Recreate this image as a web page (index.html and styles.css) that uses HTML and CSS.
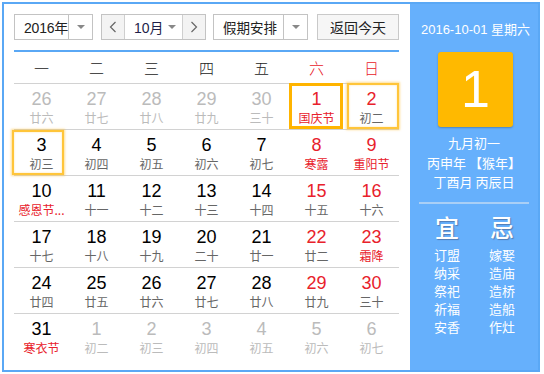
FILE: index.html
```html
<!DOCTYPE html>
<html lang="zh">
<head>
<meta charset="utf-8">
<title>万年历</title>
<link rel="stylesheet" href="styles.css">
</head>
<body>
<div class="cal">
  <div class="main">
    <div class="bar">
      <div class="sel sel-year"><span class="sel-text">2016年</span><span class="sel-arrow"></span></div>
      <div class="sel sel-month">
        <span class="nav"><svg width="8" height="12" viewBox="0 0 8 12"><polyline points="6.5,1 1.5,6 6.5,11" fill="none" stroke="#666" stroke-width="1.2"/></svg></span>
        <span class="sel-text month-text">10月</span><span class="month-arrow"></span>
        <span class="nav nav-next"><svg width="8" height="12" viewBox="0 0 8 12"><polyline points="1.5,1 6.5,6 1.5,11" fill="none" stroke="#666" stroke-width="1.2"/></svg></span>
      </div>
      <div class="sel sel-holiday"><span class="sel-text">假期安排</span><span class="sel-arrow"></span></div>
      <div class="btn-today">返回今天</div>
    </div>
    <div class="grid">
      <div class="row head">
        <span>一</span><span>二</span><span>三</span><span>四</span><span>五</span><span class="red">六</span><span class="red">日</span>
      </div>
      <div class="row">
        <div class="cell other"><b>26</b><i>廿六</i></div>
        <div class="cell other"><b>27</b><i>廿七</i></div>
        <div class="cell other"><b>28</b><i>廿八</i></div>
        <div class="cell other"><b>29</b><i>廿九</i></div>
        <div class="cell other"><b>30</b><i>三十</i></div>
        <div class="cell sel-day"><b class="red">1</b><i class="red">国庆节</i></div>
        <div class="cell glow glow-a"><b class="red">2</b><i>初二</i></div>
      </div>
      <div class="row">
        <div class="cell glow glow-b"><b>3</b><i>初三</i></div>
        <div class="cell"><b>4</b><i>初四</i></div>
        <div class="cell"><b>5</b><i>初五</i></div>
        <div class="cell"><b>6</b><i>初六</i></div>
        <div class="cell"><b>7</b><i>初七</i></div>
        <div class="cell"><b class="red">8</b><i class="red">寒露</i></div>
        <div class="cell"><b class="red">9</b><i class="red">重阳节</i></div>
      </div>
      <div class="row">
        <div class="cell"><b>10</b><i class="red">感恩节...</i></div>
        <div class="cell"><b>11</b><i>十一</i></div>
        <div class="cell"><b>12</b><i>十二</i></div>
        <div class="cell"><b>13</b><i>十三</i></div>
        <div class="cell"><b>14</b><i>十四</i></div>
        <div class="cell"><b class="red">15</b><i>十五</i></div>
        <div class="cell"><b class="red">16</b><i>十六</i></div>
      </div>
      <div class="row">
        <div class="cell"><b>17</b><i>十七</i></div>
        <div class="cell"><b>18</b><i>十八</i></div>
        <div class="cell"><b>19</b><i>十九</i></div>
        <div class="cell"><b>20</b><i>二十</i></div>
        <div class="cell"><b>21</b><i>廿一</i></div>
        <div class="cell"><b class="red">22</b><i>廿二</i></div>
        <div class="cell"><b class="red">23</b><i class="red">霜降</i></div>
      </div>
      <div class="row">
        <div class="cell"><b>24</b><i>廿四</i></div>
        <div class="cell"><b>25</b><i>廿五</i></div>
        <div class="cell"><b>26</b><i>廿六</i></div>
        <div class="cell"><b>27</b><i>廿七</i></div>
        <div class="cell"><b>28</b><i>廿八</i></div>
        <div class="cell"><b class="red">29</b><i>廿九</i></div>
        <div class="cell"><b class="red">30</b><i>三十</i></div>
      </div>
      <div class="row last">
        <div class="cell"><b>31</b><i class="red">寒衣节</i></div>
        <div class="cell other"><b>1</b><i>初二</i></div>
        <div class="cell other"><b>2</b><i>初三</i></div>
        <div class="cell other"><b>3</b><i>初四</i></div>
        <div class="cell other"><b>4</b><i>初五</i></div>
        <div class="cell other"><b>5</b><i>初六</i></div>
        <div class="cell other"><b>6</b><i>初七</i></div>
      </div>
    </div>
  </div>
  <div class="side">
    <div class="side-date">2016-10-01 星期六</div>
    <div class="big-day">1</div>
    <div class="lunar">
      <div>九月初一</div>
      <div>丙申年 【猴年】</div>
      <div>丁酉月 丙辰日</div>
    </div>
    <div class="yiji">
      <div class="col">
        <div class="yj-title">宜</div>
        <div>订盟</div><div>纳采</div><div>祭祀</div><div>祈福</div><div>安香</div>
      </div>
      <div class="col">
        <div class="yj-title">忌</div>
        <div>嫁娶</div><div>造庙</div><div>造桥</div><div>造船</div><div>作灶</div>
      </div>
    </div>
  </div>
</div>
</body>
</html>
```
FILE: styles.css
```css
* { box-sizing: border-box; }
body {
  margin: 0;
  background: #fff;
  font-family: "Liberation Sans", Arial, "Noto Sans CJK SC", sans-serif;
}
.cal {
  margin: 2px;
  width: 538px;
  height: 370px;
  border: 2px solid #5aa8f5;
  display: flex;
}
.main {
  width: 406px;
  padding: 10px 11px 0 10px;
}
.bar {
  display: flex;
  height: 26px;
}
.sel {
  display: flex;
  height: 26px;
  border: 1px solid #c3c3c3;
  background: #fff;
  font-size: 14px;
  color: #222;
  align-items: stretch;
  flex-shrink: 0;
}
.sel-text {
  display: flex;
  align-items: center;
  flex: 1;
  min-width: 0;
  padding-left: 10px;
  white-space: nowrap;
  font-family: "Liberation Sans", "Noto Sans CJK SC", sans-serif;
}
.sel-arrow {
  width: 24px;
  flex-shrink: 0;
  border-left: 1px solid #c3c3c3;
  position: relative;
}
.sel-arrow::after, .month-arrow::after {
  content: "";
  position: absolute;
  left: 50%;
  top: 50%;
  margin: -2px 0 0 -4px;
  border-left: 4px solid transparent;
  border-right: 4px solid transparent;
  border-top: 4px solid #888;
}
.sel-year { width: 79px; }
.sel-year .sel-text { padding-left: 9px; letter-spacing: -0.2px; }
.sel-month { width: 105px; margin-left: 8px; }
.sel-holiday { width: 95px; margin-left: 7px; }
.sel-holiday .sel-text { padding-left: 9px; font-size: 13.5px; }
.nav {
  width: 23px;
  flex-shrink: 0;
  background: #f3f3f3;
  border-right: 1px solid #cfcfcf;
  display: flex;
  align-items: center;
  justify-content: center;
}
.nav-next {
  border-right: 0;
  border-left: 1px solid #cfcfcf;
}
.month-text { padding-left: 9px; color: #1f1f4a; }
.month-arrow {
  width: 20px;
  flex-shrink: 0;
  position: relative;
}
.btn-today {
  width: 82px;
  flex-shrink: 0;
  margin-left: 9px;
  height: 26px;
  border: 1px solid #c9c9c9;
  background: #f6f6f6;
  font-size: 14px;
  color: #222;
  display: flex;
  align-items: center;
  justify-content: center;
  font-family: "Noto Sans CJK SC", sans-serif;
}
.grid {
  margin-top: 10px;
  border-top: 2px solid #5aa8f5;
}
.row {
  display: grid;
  grid-template-columns: repeat(7, 55px);
  height: 46px;
  border-bottom: 1px solid #d2d2d2;
}
.row.head {
  height: 32px;
  align-items: center;
  font-family: "Noto Sans CJK SC", sans-serif;
  font-size: 15px;
  font-weight: 300;
  color: #222;
}
.row.head span { text-align: center; }
.row.last { border-bottom: 0; }
.cell {
  position: relative;
  display: flex;
  flex-direction: column;
  align-items: center;
  padding-top: 5px;
}
.cell b {
  font-weight: normal;
  font-size: 18px;
  line-height: 20px;
  color: #000;
  font-family: "Liberation Sans", Arial, sans-serif;
}
.cell i {
  font-style: normal;
  font-size: 12px;
  line-height: 18px;
  color: #666;
  font-family: "Noto Sans CJK SC", sans-serif;
  white-space: nowrap;
}
.cell.other b, .cell.other i { color: #bbb; }
.cell b.red, .cell i.red, .red { color: #e8212b; }
.row.head .red { color: #e8212b; }
.sel-day::after {
  content: "";
  position: absolute;
  top: -1px;
  left: 0;
  right: 1px;
  bottom: 0;
  border: 3px solid #ffb400;
}
.glow::after {
  content: "";
  position: absolute;
  border: 2px solid #ffc53a;
  box-shadow: 0 0 2px 1px rgba(255, 195, 60, 0.55), inset 0 0 2px rgba(255, 195, 60, 0.5);
}
.glow-a::after { top: -1px; left: 3px; right: 0; bottom: 0; }
.glow-b::after { top: 0; left: -2px; right: 5px; bottom: 0; }
.side {
  width: 128px;
  background: #66b0fc;
  color: #fff;
  display: flex;
  flex-direction: column;
  align-items: center;
  font-family: "Liberation Sans", Arial, "Noto Sans CJK SC", sans-serif;
}
.side-date {
  margin-top: 16px;
  font-size: 13px;
  line-height: 20px;
  padding-left: 3px;
}
.big-day {
  margin-top: 12px;
  margin-left: 3px;
  width: 75px;
  height: 75px;
  background: #ffb900;
  border-radius: 3px;
  box-shadow: 0 1px 2px rgba(0, 0, 0, 0.25);
  font-size: 52px;
  line-height: 75px;
  text-align: center;
  font-family: "Liberation Sans", Arial, sans-serif;
}
.lunar {
  margin-top: 6px;
  font-size: 13px;
  line-height: 19.5px;
  text-align: center;
  font-family: "Noto Sans CJK SC", sans-serif;
}
.yiji {
  margin-top: 10px;
  width: 110px;
  border-top: 2px solid #a9cff6;
  display: grid;
  grid-template-columns: 56px 54px;
  font-family: "Noto Sans CJK SC", sans-serif;
  font-size: 13px;
  line-height: 18px;
  text-align: center;
}
.yj-title {
  font-size: 24px;
  line-height: 28px;
  margin: 9px 0 5px;
  font-weight: 500;
  text-shadow: 1px 1px 1px rgba(60, 60, 90, 0.45);
}
```
